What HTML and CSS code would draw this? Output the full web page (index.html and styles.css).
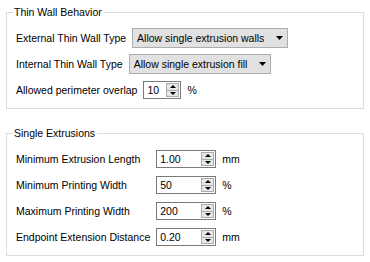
FILE: index.html
```html
<!DOCTYPE html>
<html lang="en">
<head>
    <meta charset="UTF-8">
    <title>Thin Wall Settings</title>
    <link rel="stylesheet" href="styles.css">
</head>
<body>
    <!-- Thin wall group -->
    <fieldset class="group">
        <legend>Thin Wall Behavior</legend>
        <div class="row">
            <span class="label">External Thin Wall Type</span>
            <div class="combo">
                <span>Allow single extrusion walls</span>
                <svg class="arrow" width="7" height="4" viewBox="0 0 7 4"><polygon points="0,0 7,0 3.5,4" fill="#000"/></svg>
            </div>
        </div>
        <div class="row">
            <span class="label">Internal Thin Wall Type</span>
            <div class="combo">
                <span>Allow single extrusion fill</span>
                <svg class="arrow" width="7" height="4" viewBox="0 0 7 4"><polygon points="0,0 7,0 3.5,4" fill="#000"/></svg>
            </div>
        </div>
        <div class="row">
            <span class="label">Allowed perimeter overlap</span>
            <div class="spin spin-short">
                <span class="value">10</span>
                <span class="spin-btns"><span class="up"></span><span class="down"></span></span>
            </div>
            <span class="unit">%</span>
        </div>
    </fieldset>

    <!-- Single extrusion group -->
    <fieldset class="group">
        <legend>Single Extrusions</legend>
        <div class="form-grid">
            <span class="label">Minimum Extrusion Length</span>
            <div class="spin">
                <span class="value">1.00</span>
                <span class="spin-btns"><span class="up"></span><span class="down"></span></span>
            </div>
            <span class="unit">mm</span>

            <span class="label">Minimum Printing Width</span>
            <div class="spin">
                <span class="value">50</span>
                <span class="spin-btns"><span class="up"></span><span class="down"></span></span>
            </div>
            <span class="unit">%</span>

            <span class="label">Maximum Printing Width</span>
            <div class="spin">
                <span class="value">200</span>
                <span class="spin-btns"><span class="up"></span><span class="down"></span></span>
            </div>
            <span class="unit">%</span>

            <span class="label">Endpoint Extension Distance</span>
            <div class="spin">
                <span class="value">0.20</span>
                <span class="spin-btns"><span class="up"></span><span class="down"></span></span>
            </div>
            <span class="unit">mm</span>
        </div>
    </fieldset>
</body>
</html>
```

FILE: styles.css
```css
* {
    margin: 0;
    padding: 0;
    box-sizing: border-box;
}

body {
    font-family: 'Liberation Sans', Arial, sans-serif;
    font-size: 10.5px;
    color: #000;
    background: #fff;
    padding: 6px 6px 0 6px;
}

/* Group boxes */
.group {
    border: 1px solid #dcdcdc;
    padding: 6px 9px 5px 9px;
}

.group + .group {
    margin-top: 18px;
}

.group legend {
    line-height: 13px;
    padding: 0 2px 0 1px;
    margin-left: -3px;
}

.row {
    display: flex;
    align-items: center;
    gap: 6px;
    height: 26px;
}

.form-grid {
    display: grid;
    grid-template-columns: auto auto 1fr;
    grid-auto-rows: 26px;
    align-items: center;
    column-gap: 6px;
}

/* Combo box */
.combo {
    display: flex;
    align-items: center;
    height: 20px;
    padding: 0 4px 0 4px;
    border: 1px solid #adadad;
    background: #e1e1e1;
}

.combo .arrow {
    margin-left: 12px;
}

/* Spin box */
.spin {
    display: flex;
    align-items: center;
    width: 60px;
    height: 18px;
    padding-left: 3px;
    border: 1px solid #7a7a7a;
    background: #fff;
}

.spin-short {
    width: 38px;
}

.spin .value {
    flex: 1;
}

.spin-btns {
    display: flex;
    flex-direction: column;
    width: 13px;
    height: 14px;
    margin-right: 1px;
    border: 1px solid #acacac;
    background: #e6e6e6;
}

.spin-btns span {
    flex: 1;
    display: flex;
    align-items: center;
    justify-content: center;
}

.spin-btns .down {
    border-top: 1px solid #acacac;
}

.spin-btns .up::before,
.spin-btns .down::before {
    content: '';
    border-left: 3px solid transparent;
    border-right: 3px solid transparent;
}

.spin-btns .up::before {
    border-bottom: 3px solid #000;
}

.spin-btns .down::before {
    border-top: 3px solid #000;
}
```
